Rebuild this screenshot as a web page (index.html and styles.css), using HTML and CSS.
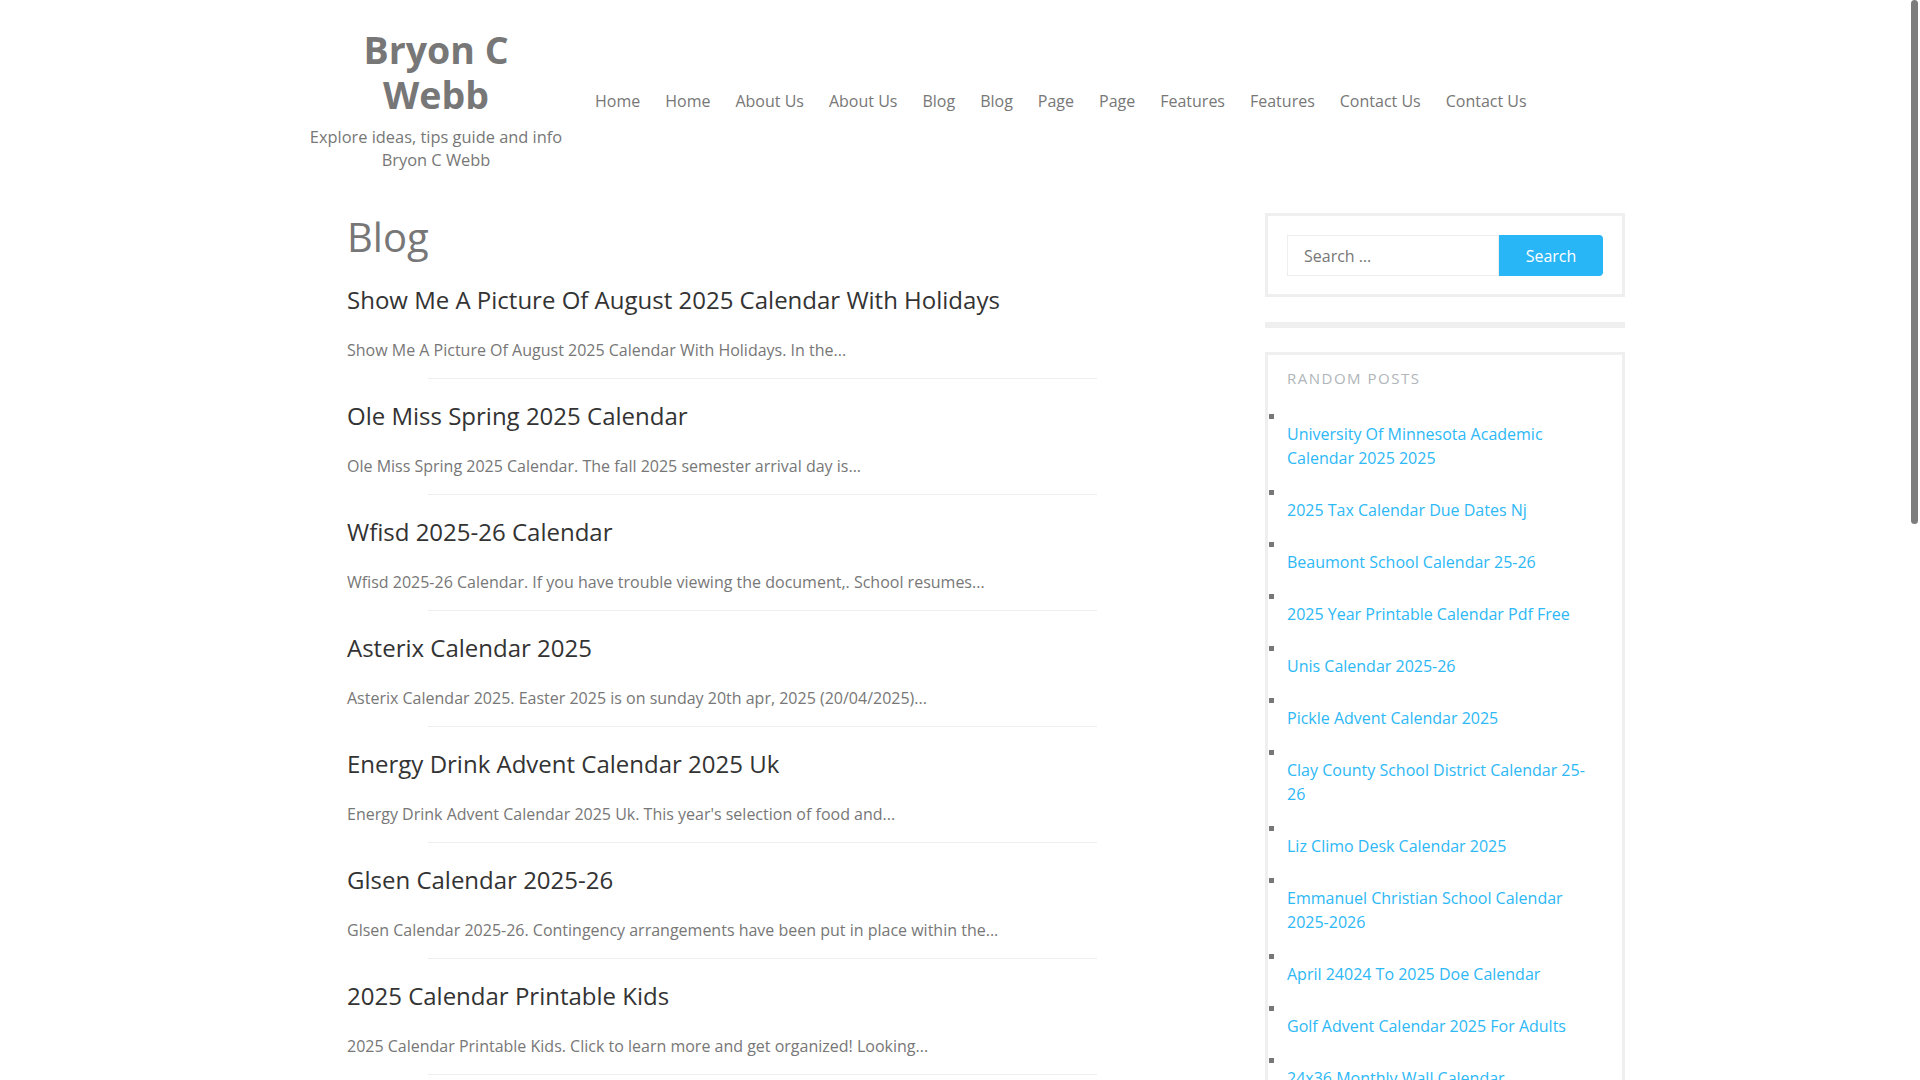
FILE: index.html
```html
<!DOCTYPE html>
<html lang="en">
<head>
<meta charset="utf-8">
<title>Blog - Bryon C Webb</title>
<link rel="stylesheet" href="styles.css">
</head>
<body>
<header class="site-header">
  <div class="branding">
    <p class="site-title">Bryon C Webb</p>
    <p class="site-desc">Explore ideas, tips guide and info Bryon C Webb</p>
  </div>
  <nav class="main-nav">
    <a href="#">Home</a>
    <a href="#">Home</a>
    <a href="#">About Us</a>
    <a href="#">About Us</a>
    <a href="#">Blog</a>
    <a href="#">Blog</a>
    <a href="#">Page</a>
    <a href="#">Page</a>
    <a href="#">Features</a>
    <a href="#">Features</a>
    <a href="#">Contact Us</a>
    <a href="#">Contact Us</a>
  </nav>
</header>
<div class="content">
  <main class="main">
    <h1 class="page-title">Blog</h1>
    <article class="post">
      <h2>Show Me A Picture Of August 2025 Calendar With Holidays</h2>
      <p>Show Me A Picture Of August 2025 Calendar With Holidays. In the...</p>
      <hr>
    </article>
    <article class="post">
      <h2>Ole Miss Spring 2025 Calendar</h2>
      <p>Ole Miss Spring 2025 Calendar. The fall 2025 semester arrival day is...</p>
      <hr>
    </article>
    <article class="post">
      <h2>Wfisd 2025-26 Calendar</h2>
      <p>Wfisd 2025-26 Calendar. If you have trouble viewing the document,. School resumes...</p>
      <hr>
    </article>
    <article class="post">
      <h2>Asterix Calendar 2025</h2>
      <p>Asterix Calendar 2025. Easter 2025 is on sunday 20th apr, 2025 (20/04/2025)...</p>
      <hr>
    </article>
    <article class="post">
      <h2>Energy Drink Advent Calendar 2025 Uk</h2>
      <p>Energy Drink Advent Calendar 2025 Uk. This year's selection of food and...</p>
      <hr>
    </article>
    <article class="post">
      <h2>Glsen Calendar 2025-26</h2>
      <p>Glsen Calendar 2025-26. Contingency arrangements have been put in place within the...</p>
      <hr>
    </article>
    <article class="post">
      <h2>2025 Calendar Printable Kids</h2>
      <p>2025 Calendar Printable Kids. Click to learn more and get organized! Looking...</p>
      <hr>
    </article>
    <article class="post">
      <h2>Ucf Academic Calendar 2025-26</h2>
      <p>Ucf Academic Calendar 2025-26. The academic calendar lists important dates...</p>
      <hr>
    </article>
    <article class="post">
      <h2>Printable 2025 Calendar With Week Numbers</h2>
      <p>Printable 2025 Calendar With Week Numbers. Free printable calendars for...</p>
      <hr>
    </article>
    <article class="post">
      <h2>Nfl Calendar 2025 Schedule</h2>
      <p>Nfl Calendar 2025 Schedule. Find the full schedule of games for the...</p>
      <hr>
    </article>
    <article class="post">
      <h2>Lunar Calendar 2025 Chinese New Year</h2>
      <p>Lunar Calendar 2025 Chinese New Year. The year of the snake begins on...</p>
      <hr>
    </article>
    <article class="post">
      <h2>Hebrew Calendar 2025 Holidays</h2>
      <p>Hebrew Calendar 2025 Holidays. Jewish holidays begin at sundown on the...</p>
      <hr>
    </article>
    <article class="post">
      <h2>Disney Crowd Calendar 2025</h2>
      <p>Disney Crowd Calendar 2025. Plan your visit with the best days to go...</p>
      <hr>
    </article>
    <article class="post">
      <h2>School Calendar 2025-26 Texas</h2>
      <p>School Calendar 2025-26 Texas. The first day of school for students is...</p>
      <hr>
    </article>
    <article class="post">
      <h2>Moon Phase Calendar 2025</h2>
      <p>Moon Phase Calendar 2025. See the dates of every full moon and new moon...</p>
      <hr>
    </article>
  </main>
  <aside class="sidebar">
    <section class="widget widget-search">
      <form class="search-form">
        <input class="search-field" type="search" placeholder="Search …">
        <button class="search-submit" type="button">Search</button>
      </form>
    </section>
    <div class="widget-divider"></div>
    <section class="widget widget-posts">
      <h3 class="widget-title">Random Posts</h3>
      <ul class="post-list">
        <li><a href="#">University Of Minnesota Academic Calendar 2025 2025</a></li>
        <li><a href="#">2025 Tax Calendar Due Dates Nj</a></li>
        <li><a href="#">Beaumont School Calendar 25-26</a></li>
        <li><a href="#">2025 Year Printable Calendar Pdf Free</a></li>
        <li><a href="#">Unis Calendar 2025-26</a></li>
        <li><a href="#">Pickle Advent Calendar 2025</a></li>
        <li><a href="#">Clay County School District Calendar 25-26</a></li>
        <li><a href="#">Liz Climo Desk Calendar 2025</a></li>
        <li><a href="#">Emmanuel Christian School Calendar 2025-2026</a></li>
        <li><a href="#">April 24024 To 2025 Doe Calendar</a></li>
        <li><a href="#">Golf Advent Calendar 2025 For Adults</a></li>
        <li><a href="#">24x36 Monthly Wall Calendar</a></li>
        <li><a href="#">Printable Calendar 2025 Free Download</a></li>
        <li><a href="#">Chicago Public Schools Calendar 2025-26</a></li>
        <li><a href="#">Tide Calendar 2025 Maine</a></li>
      </ul>
    </section>
  </aside>
</div>
<footer class="site-footer">
  <p>Copyright © 2025 Bryon C Webb</p>
</footer>
<div class="scrollbar" aria-hidden="true"><div class="scrollbar-thumb"></div></div>
</body>
</html>
```

FILE: styles.css
```css
html, body {
  margin: 0;
  padding: 0;
}

body {
  font-family: "Open Sans", "Liberation Sans", sans-serif;
  color: #777;
  background: #fff;
}

a {
  text-decoration: none;
}

.site-header {
  display: flex;
  align-items: flex-start;
  margin-left: 308px;
}

.branding {
  width: 256px;
  padding-top: 27px;
  text-align: center;
}

.site-title {
  max-width: 200px;
  margin: 0 auto;
  font-size: 37.5px;
  line-height: 45px;
  font-weight: 700;
  color: #777;
}

.site-desc {
  margin: 8px 0 0;
  font-size: 16.4px;
  line-height: 23px;
  color: #777;
}

.main-nav {
  display: flex;
  gap: 25px;
  margin-left: 31px;
  padding-top: 89px;
}

.main-nav a {
  font-size: 16px;
  line-height: 24px;
  color: #777;
}

.content {
  display: flex;
  align-items: flex-start;
  margin-left: 347px;
  margin-top: 42px;
}

.main {
  width: 831px;
}

.page-title {
  margin: 0 0 20.5px;
  font-size: 40px;
  line-height: 48px;
  font-weight: 400;
  color: #777;
}

.post h2 {
  margin: 0;
  font-size: 24px;
  line-height: 36px;
  font-weight: 400;
  color: #333;
}

.post p {
  margin: 20px 0 0;
  font-size: 16px;
  line-height: 24px;
  color: #777;
}

.post hr {
  width: 80.6%;
  height: 0;
  margin: 16px auto 19px;
  border: 0;
  border-top: 1px solid #eeeeee;
}

.sidebar {
  width: 360px;
  margin-left: 87px;
}

.widget {
  border: 3px solid #efefef;
  padding: 19px;
}

.widget-search {
  padding-bottom: 18px;
}

.search-form {
  display: flex;
}

.search-field {
  box-sizing: border-box;
  width: 212px;
  height: 41px;
  margin: 0;
  padding: 0 16px;
  border: 1px solid #eeeeee;
  border-radius: 0;
  font-family: "Open Sans", "Liberation Sans", sans-serif;
  font-size: 16px;
  color: #777;
  outline: none;
  -webkit-appearance: none;
  appearance: none;
}

.search-field::placeholder {
  color: #777;
  opacity: 1;
}

.search-submit {
  width: 104px;
  height: 41px;
  margin: 0;
  padding: 0;
  border: 0;
  border-radius: 0 4px 4px 0;
  background: #29b6f6;
  color: #fff;
  font-family: "Open Sans", "Liberation Sans", sans-serif;
  font-size: 16px;
}

.widget-divider {
  height: 6px;
  margin: 25px 0 24px;
  background: #efefef;
}

.widget-posts {
  padding-top: 12px;
}

.widget-title {
  margin: 0;
  font-size: 15px;
  line-height: 22px;
  font-weight: 400;
  letter-spacing: 1.5px;
  text-transform: uppercase;
  color: #b0b5b9;
}

.post-list {
  list-style: none;
  margin: 25px 0 0;
  padding: 0;
}

.post-list li {
  position: relative;
  padding-top: 8px;
  margin-bottom: 20px;
  font-size: 16px;
  line-height: 24px;
}

.post-list li::before {
  content: "";
  position: absolute;
  left: -18px;
  top: 0;
  width: 5px;
  height: 5px;
  background: #777;
}

.post-list a {
  color: #2db8f6;
}

.site-footer {
  margin-top: 40px;
  padding: 20px 0;
  text-align: center;
  font-size: 14px;
  color: #999;
}

.site-footer p {
  margin: 0;
}

.scrollbar {
  position: fixed;
  top: 0;
  right: 0;
  width: 11px;
  height: 100vh;
}

.scrollbar-thumb {
  width: 7px;
  height: 524px;
  margin-left: 2px;
  border-radius: 4px;
  background: #7d7d7d;
}
```
